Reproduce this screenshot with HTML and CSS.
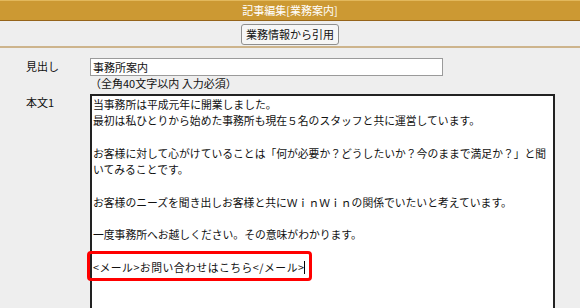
FILE: index.html
```html
<!DOCTYPE html>
<html lang="ja">
<head>
	<meta charset="UTF-8">
	<title>記事編集</title>
	<link rel="stylesheet" href="styles.css">
</head>
<body>

	<header class="title-bar">記事編集[業務案内]</header>

	<div class="toolbar">
		<button class="btn">業務情報から引用</button>
	</div>

	<form class="edit-form">
		<label class="label">見出し</label>
		<div class="field">
			<input class="text-input" type="text" value="事務所案内">
			<div class="hint">（全角40文字以内 入力必須）</div>
		</div>

		<label class="label">本文1</label>
		<div class="field">
			<div class="body-text">当事務所は平成元年に開業しました。
最初は私ひとりから始めた事務所も現在５名のスタッフと共に運営しています。

お客様に対して心がけていることは「何が必要か？どうしたいか？今のままで満足か？」と聞
いてみることです。

お客様のニーズを聞き出しお客様と共にＷｉｎＷｉｎの関係でいたいと考えています。

一度事務所へお越しください。その意味がわかります。

<span class="mail">&lt;メール&gt;お問い合わせはこちら&lt;/メール&gt;</span><span class="caret"></span></div>
			<div class="mark"></div>
		</div>
	</form>

</body>
</html>
```

FILE: styles.css
```css
body{
	margin: 0;
	padding: 0;
	background-color: #EEEEEE;
	font-family: "Noto Sans CJK JP", "Noto Sans", sans-serif;
	font-size: 11px;
	color: #111;
}

.title-bar{
	height: 19px;
	line-height: 19px;
	background-color: #CC9933;
	border-top: 1px solid #E2B85C;
	border-bottom: 1px solid #95641A;
	color: #fff;
	text-align: center;
	font-size: 11px;
}

.toolbar{
	text-align: center;
	padding: 3px 0 1px;
	border-bottom: 2px solid #CDB48C;
}

.btn{
	font-family: inherit;
	font-size: 11px;
	height: 21px;
	line-height: 17px;
	padding: 0 4px;
	background-color: #F6F6F6;
	border: 1px solid #8F8F8F;
	border-radius: 3px;
	color: #111;
}

.edit-form{
	display: grid;
	grid-template-columns: 64px 465px;
	row-gap: 4px;
	padding: 10px 0 0 26px;
}

.label{
	line-height: 16px;
}

.field{
	position: relative;
}

.text-input{
	display: block;
	box-sizing: border-box;
	width: 353px;
	height: 18px;
	margin: 0;
	padding: 0 2px;
	border: 1px solid #9A9A9A;
	background-color: #fff;
	font-family: inherit;
	font-size: 11px;
	color: #111;
	outline: none;
}

.hint{
	line-height: 14px;
}

.body-text{
	box-sizing: border-box;
	width: 465px;
	height: 240px;
	border: 2px solid #222;
	background-color: #fff;
	padding: 0 1px;
	white-space: pre;
	font-size: 10.8px;
	line-height: 16.3px;
	overflow: hidden;
}

.body-text .mail{
	letter-spacing: 0.5px;
}

.caret{
	display: inline-block;
	width: 1px;
	height: 13px;
	background-color: #000;
	vertical-align: -2px;
}

.mark{
	position: absolute;
	left: -3px;
	top: 157px;
	width: 219px;
	height: 24px;
	border: 3px solid #F00;
	border-radius: 4px;
}
```
